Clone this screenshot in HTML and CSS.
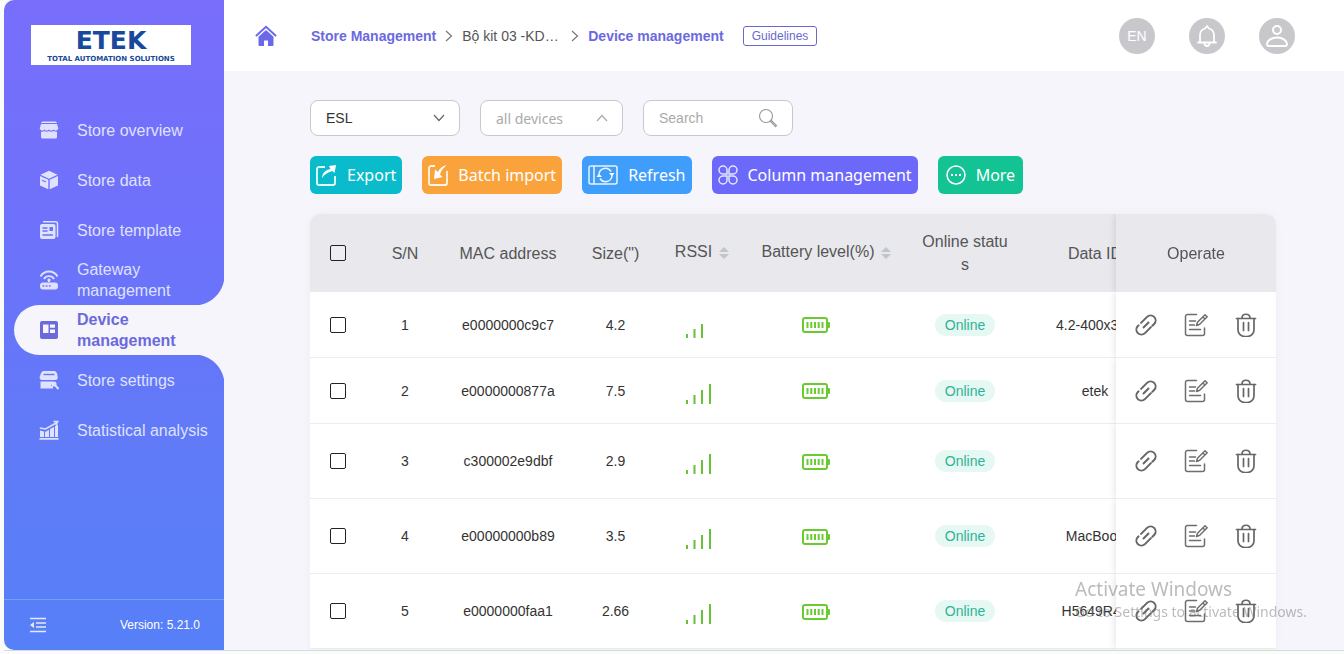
FILE: index.html
```html
<!DOCTYPE html>
<html lang="en">
<head>
    <meta charset="UTF-8">
    <meta name="viewport" content="width=device-width, initial-scale=1.0">
    <title>Device management</title>
    <link rel="stylesheet" href="styles.css">
</head>
<body>
    <!-- Shared icons -->
    <svg class="sprite" aria-hidden="true">
        <symbol id="i-rssi3" viewBox="0 0 34 26">
            <path d="M2 22v4M9.500 17v9M17 12v14" stroke="#67c23a" stroke-width="2" fill="none"/>
        </symbol>
        <symbol id="i-rssi4" viewBox="0 0 34 26">
            <path d="M2 22v4M9.500 17v9M17 12v14M25 6v20" stroke="#67c23a" stroke-width="2" fill="none"/>
        </symbol>
        <symbol id="i-battery" viewBox="0 0 28 16">
            <rect x="1" y="1" width="24" height="14" rx="2" fill="none" stroke="#69cb2f" stroke-width="2"/>
            <path d="M5.500 5v6M9.300 5v6M13 5v6M16.700 5v6M20.500 5v6" stroke="#69cb2f" stroke-width="2"/>
            <rect x="25" y="5" width="3" height="6" rx="1" fill="#69cb2f"/>
        </symbol>
        <symbol id="i-link" viewBox="0 0 24 24">
            <g fill="none" stroke="#666" stroke-width="2" stroke-linecap="round" transform="rotate(-45 12 12)">
                <path d="M10 7h8.500a5 5 0 0 1 0 10h-2.500"/>
                <path d="M14 17H5.500a5 5 0 0 1 0-10h1"/>
                <path d="M8.500 12h7"/>
            </g>
        </symbol>
        <symbol id="i-edit" viewBox="0 0 24 24">
            <g fill="none" stroke="#6e6e6e" stroke-width="1.500" stroke-linecap="round" stroke-linejoin="round">
                <path d="M12.500 1.500h-9a2 2 0 0 0-2 2v17a2 2 0 0 0 2 2h15a2 2 0 0 0 2-2v-5.500"/>
                <path d="M5.500 8h6M5.500 12h5M5.500 16.500h11"/>
                <path d="M12.500 12.500l1-3.300 7.500-7.500 2.200 2-7.500 7.600zM18.800 4l2.200 2"/>
            </g>
        </symbol>
        <symbol id="i-trash" viewBox="0 0 24 24">
            <g fill="none" stroke="#666" stroke-width="1.700" stroke-linecap="round">
                <path d="M2.500 5.500h19M8 5c0-5 8-5 8 0"/>
                <path d="M4 5.500v11.500a7 6.500 0 0 0 7 6.500h2a7 6.500 0 0 0 7-6.500v-11.500"/>
                <path d="M9.500 9.500v8M14.500 9.500v8"/>
            </g>
        </symbol>
        <symbol id="i-sort" viewBox="0 0 10 12">
            <path d="M5 0l5 5H0zM5 12l5-5H0z" fill="#c0c4cc"/>
        </symbol>
    </svg>

    <div class="app">
        <aside class="sidebar">
            <div class="logo">
                <span class="logo-name">ETEK</span>
                <span class="logo-tag">TOTAL AUTOMATION SOLUTIONS</span>
            </div>

            <nav class="menu">
                <a class="menu-item" href="#">
                    <svg class="menu-icon" viewBox="0 0 20 20"><path fill="currentColor" d="M4 1.500h12a2 2 0 0 1 2 1.500H2a2 2 0 0 1 2-1.500zM2 4h16l1.300 4.500a2.600 2.600 0 0 1-4.700 1 2.900 2.900 0 0 1-4.600 0 2.900 2.900 0 0 1-4.600 0 2.600 2.600 0 0 1-4.700-1zM2 11.800a5 5 0 0 0 3.400-.7 5 5 0 0 0 4.600 0 5 5 0 0 0 4.600 0 5 5 0 0 0 3.400.7V17a1.500 1.500 0 0 1-1.500 1.500h-13A1.500 1.500 0 0 1 2 17z"/></svg>
                    <span>Store overview</span>
                </a>
                <a class="menu-item" href="#">
                    <svg class="menu-icon" viewBox="0 0 20 20"><path fill="currentColor" d="M10 .8l8.500 3.900L10 8.800 1.500 4.700zM1 6l8.300 3.800v9.400L1 15.400zM19 6l-8.300 3.800v9.400l8.300-3.800z"/><path d="M3 10.200l4 1.800" stroke="#7070fa" stroke-width="1.200"/></svg>
                    <span>Store data</span>
                </a>
                <a class="menu-item" href="#">
                    <svg class="menu-icon" viewBox="0 0 20 20"><path fill="none" stroke="currentColor" stroke-width="1.500" d="M4 1.800h12.500a2 2 0 0 1 2 2V17"/><rect x="1" y="4" width="15.500" height="15" rx="2" fill="currentColor"/><path d="M3.500 8h5M3.500 11h5M3.500 15h10.500" stroke="#6a74f8" stroke-width="1.500"/><path d="M10.500 7h3.500v4h-3.500z" fill="#6a74f8"/></svg>
                    <span>Store template</span>
                </a>
                <a class="menu-item" href="#">
                    <svg class="menu-icon" viewBox="0 0 20 20"><rect x="1" y="12.500" width="18" height="7" rx="3" fill="currentColor"/><path d="M3.500 16h1.800M6.700 16h1.800M9.900 16h1.800" stroke="#6a74f8" stroke-width="1.500"/><path d="M10 12V9.500M1.500 6.500a9.700 9.700 0 0 1 17 0M5 9a5.800 5.800 0 0 1 10 0" fill="none" stroke="currentColor" stroke-width="1.900"/><circle cx="10" cy="10" r="1.600" fill="currentColor"/></svg>
                    <span>Gateway management</span>
                </a>
                <a class="menu-item active" href="#">
                    <svg class="menu-icon" viewBox="0 0 20 20"><rect x="1" y="1" width="18" height="18" rx="2" fill="currentColor"/><path d="M4 4.500h5.500v8.500H4zM11 4.500h5v3.300h-5zM11 9.500h5v3.500h-5z" fill="#f5f5fb"/></svg>
                    <span>Device management</span>
                </a>
                <a class="menu-item" href="#">
                    <svg class="menu-icon" viewBox="0 0 20 20"><path fill="currentColor" d="M4 1h12l2 2 .8 4.500a2.500 2.500 0 0 1-2.600 2.500H2.800A2.500 2.500 0 0 1 .5 7.500L2 3zM1.500 11.500h12.500l-2 4.500h2v2.500h-12.500z"/><path d="M4.500 4.500h11" stroke="#6677f8" stroke-width="1.400"/><circle cx="15" cy="14" r="2.500" fill="currentColor"/><path d="M15.500 14.500l4 4.500" stroke="currentColor" stroke-width="2"/></svg>
                    <span>Store settings</span>
                </a>
                <a class="menu-item" href="#">
                    <svg class="menu-icon" viewBox="0 0 20 20"><path fill="currentColor" d="M1 10.500l4 1V17H1zM6 12l4-2v7H6zM11 9l4-2v10h-4zM16 6l3-1.500V17h-3zM.5 18h19v1.700H.5z"/><path d="M.8 8l5.700 1L18 2.500M14.500 1.500h4.200L17 5" fill="none" stroke="currentColor" stroke-width="1.500"/></svg>
                    <span>Statistical analysis</span>
                </a>
            </nav>

            <div class="sidebar-footer">
                <button class="collapse" type="button" aria-label="Collapse menu">
                    <svg width="16" height="16" viewBox="0 0 16 16"><path d="M0 1.500h16M6 6h10M6 10h10M0 14.500h16" stroke="#e6eaff" stroke-width="1.500"/><path d="M0 8l4-3v6z" fill="#e6eaff"/></svg>
                </button>
                <span>Version: 5.21.0</span>
            </div>
        </aside>

        <div class="main">
            <header class="topbar">
                <a class="home" href="#" aria-label="Home">
                    <svg width="22" height="22" viewBox="0 0 22 22"><path d="M1.500 10.500L11 1.800l9.500 8.700" fill="none" stroke="#6b69ea" stroke-width="2" stroke-linecap="round"/><path d="M11 5l7.500 6.800V20a1 1 0 0 1-1 1H13v-5.500H9V21H4.500a1 1 0 0 1-1-1v-8.200z" fill="#6b69ea"/></svg>
                </a>
                <nav class="breadcrumb">
                    <a href="#">Store Management</a>
                    <svg class="crumb-arrow" viewBox="0 0 8 12"><path d="M1 1l5.500 5L1 11" fill="none" stroke="#777" stroke-width="1.200"/></svg>
                    <span class="crumb-store">Bộ kit 03 -KD…</span>
                    <svg class="crumb-arrow" viewBox="0 0 8 12"><path d="M1 1l5.500 5L1 11" fill="none" stroke="#777" stroke-width="1.200"/></svg>
                    <a href="#">Device management</a>
                </nav>
                <button class="guidelines" type="button">Guidelines</button>
                <div class="user-tools">
                    <button class="round" type="button">EN</button>
                    <button class="round" type="button" aria-label="Notifications">
                        <svg width="22" height="24" viewBox="0 0 22 24"><path d="M2 18.500h18M4 18v-7a7 7 0 0 1 5-6.500L11 2l2 2.500a7 7 0 0 1 5 6.500v7M8.500 19c0 4 5 4 5 0" fill="none" stroke="#fff" stroke-width="1.800" stroke-linecap="round" stroke-linejoin="round"/></svg>
                    </button>
                    <button class="round" type="button" aria-label="Account">
                        <svg width="24" height="24" viewBox="0 0 24 24"><g fill="none" stroke="#fff" stroke-width="2"><circle cx="12" cy="6" r="4"/><path d="M12 13.500c6 0 10 3.500 10 6.500 0 1.500-1 2-2 2H4c-1 0-2-.5-2-2 0-3 4-6.500 10-6.500z"/></g></svg>
                    </button>
                </div>
            </header>

            <main class="content">
                <div class="filters">
                    <div class="field">
                        <select aria-label="Device type"><option>ESL</option></select>
                        <svg width="12" height="8" viewBox="0 0 12 8"><path d="M1 1l5 5.500L11 1" fill="none" stroke="#666" stroke-width="1.200"/></svg>
                    </div>
                    <div class="field field-status">
                        <select aria-label="Device status"><option>all devices</option></select>
                        <svg width="12" height="8" viewBox="0 0 12 8"><path d="M1 7l5-5.500L11 7" fill="none" stroke="#aaa" stroke-width="1.200"/></svg>
                    </div>
                    <div class="field">
                        <input type="text" placeholder="Search" aria-label="Search">
                        <svg width="20" height="20" viewBox="0 0 20 20"><g fill="none" stroke="#999" stroke-width="1.100"><circle cx="8" cy="8" r="6.500"/><path d="M12.500 13.500l1-1 5 5-1 1.200z"/></g></svg>
                    </div>
                </div>

                <div class="actions">
                    <button class="btn export" type="button">
                        <svg width="21" height="22" viewBox="0 0 21 22"><path d="M9 3H3a2 2 0 0 0-2 2v14a2 2 0 0 0 2 2h14a2 2 0 0 0 2-2v-7" fill="none" stroke="#e8ffff" stroke-width="1.800"/><path d="M6 14c.5-6 4-8 8.500-9L13 2l7-1-1.500 8-2-2C12 8 9 10 6 14z" fill="#fff"/></svg>
                        Export
                    </button>
                    <button class="btn import" type="button">
                        <svg width="20" height="22" viewBox="0 0 20 22"><path d="M7 2H3a2 2 0 0 0-2 2v15a2 2 0 0 0 2 2h14a2 2 0 0 0 2-2V7" fill="none" stroke="#fff6e4" stroke-width="1.800"/><path d="M18.500 1c-4 1-6.500 3-8.500 7L7 5.500 6 15l8.500-2-2.500-2.500c1-4 3-6 6.500-9.500z" fill="#fff"/></svg>
                        Batch import
                    </button>
                    <button class="btn refresh" type="button">
                        <svg width="30" height="22" viewBox="0 0 30 22"><g fill="none" stroke="#e8f3ff" stroke-width="1.500"><rect x="1" y="2" width="28" height="18" rx="2"/><path d="M6 2v18M11 10a6.500 6.500 0 0 1 12-2.500M24 12a6.500 6.500 0 0 1-12 2.500"/></g><path d="M21 9h5.500l-2.500 3.500zM8.500 13h5.500l-3-3.500z" fill="#fff"/></svg>
                        Refresh
                    </button>
                    <button class="btn columns" type="button">
                        <svg width="20" height="20" viewBox="0 0 20 20"><g fill="none" stroke="#e6e6ff" stroke-width="1.500"><path d="M5 1a4 4 0 0 1 4 4v4H5a4 4 0 0 1 0-8zM15 1a4 4 0 0 0-4 4v4h4a4 4 0 0 0 0-8zM5 19a4 4 0 0 0 4-4v-4H5a4 4 0 0 0 0 8zM15 19a4 4 0 0 1-4-4v-4h4a4 4 0 0 1 0 8z"/></g></svg>
                        Column management
                    </button>
                    <button class="btn more" type="button">
                        <svg width="20" height="20" viewBox="0 0 20 20"><circle cx="10" cy="10" r="9" fill="none" stroke="#fff" stroke-width="1.500"/><path d="M5 9h2v2H5zM9 9h2v2H9zM13 9h2v2h-2z" fill="#fff"/></svg>
                        More
                    </button>
                </div>

                <div class="table-wrap">
                    <table class="devices">
                        <colgroup>
                            <col class="c-check"><col class="c-sn"><col class="c-mac"><col class="c-size"><col class="c-rssi"><col class="c-battery"><col class="c-status"><col class="c-data"><col class="c-operate">
                        </colgroup>
                        <thead>
                            <tr>
                                <th><input type="checkbox" aria-label="Select all"></th>
                                <th>S/N</th>
                                <th>MAC address</th>
                                <th>Size(")</th>
                                <th>RSSI<span class="sort"><svg width="10" height="12"><use href="#i-sort"/></svg></span></th>
                                <th>Battery level(%)<span class="sort"><svg width="10" height="12"><use href="#i-sort"/></svg></span></th>
                                <th class="break">Online status</th>
                                <th>Data ID</th>
                                <th class="operate">Operate</th>
                            </tr>
                        </thead>
                        <tbody>
                            <tr>
                                <td><input type="checkbox" aria-label="Select device 1"></td>
                                <td>1</td>
                                <td>e0000000c9c7</td>
                                <td>4.2</td>
                                <td><svg width="34" height="26"><use href="#i-rssi3"/></svg></td>
                                <td class="battery"><svg width="28" height="16"><use href="#i-battery"/></svg></td>
                                <td><span class="tag">Online</span></td>
                                <td>4.2-400x300</td>
                                <td class="operate">
                                    <div class="ops">
                                        <button type="button" aria-label="Bind"><svg width="24" height="24"><use href="#i-link"/></svg></button>
                                        <button type="button" aria-label="Edit"><svg width="24" height="24"><use href="#i-edit"/></svg></button>
                                        <button type="button" aria-label="Delete"><svg width="24" height="24"><use href="#i-trash"/></svg></button>
                                    </div>
                                </td>
                            </tr>
                            <tr>
                                <td><input type="checkbox" aria-label="Select device 2"></td>
                                <td>2</td>
                                <td>e0000000877a</td>
                                <td>7.5</td>
                                <td><svg width="34" height="26"><use href="#i-rssi4"/></svg></td>
                                <td class="battery"><svg width="28" height="16"><use href="#i-battery"/></svg></td>
                                <td><span class="tag">Online</span></td>
                                <td>etek</td>
                                <td class="operate">
                                    <div class="ops">
                                        <button type="button" aria-label="Bind"><svg width="24" height="24"><use href="#i-link"/></svg></button>
                                        <button type="button" aria-label="Edit"><svg width="24" height="24"><use href="#i-edit"/></svg></button>
                                        <button type="button" aria-label="Delete"><svg width="24" height="24"><use href="#i-trash"/></svg></button>
                                    </div>
                                </td>
                            </tr>
                            <tr class="tall">
                                <td><input type="checkbox" aria-label="Select device 3"></td>
                                <td>3</td>
                                <td>c300002e9dbf</td>
                                <td>2.9</td>
                                <td><svg width="34" height="26"><use href="#i-rssi4"/></svg></td>
                                <td class="battery"><svg width="28" height="16"><use href="#i-battery"/></svg></td>
                                <td><span class="tag">Online</span></td>
                                <td></td>
                                <td class="operate">
                                    <div class="ops">
                                        <button type="button" aria-label="Bind"><svg width="24" height="24"><use href="#i-link"/></svg></button>
                                        <button type="button" aria-label="Edit"><svg width="24" height="24"><use href="#i-edit"/></svg></button>
                                        <button type="button" aria-label="Delete"><svg width="24" height="24"><use href="#i-trash"/></svg></button>
                                    </div>
                                </td>
                            </tr>
                            <tr class="tall">
                                <td><input type="checkbox" aria-label="Select device 4"></td>
                                <td>4</td>
                                <td>e00000000b89</td>
                                <td>3.5</td>
                                <td><svg width="34" height="26"><use href="#i-rssi4"/></svg></td>
                                <td class="battery"><svg width="28" height="16"><use href="#i-battery"/></svg></td>
                                <td><span class="tag">Online</span></td>
                                <td>MacBook</td>
                                <td class="operate">
                                    <div class="ops">
                                        <button type="button" aria-label="Bind"><svg width="24" height="24"><use href="#i-link"/></svg></button>
                                        <button type="button" aria-label="Edit"><svg width="24" height="24"><use href="#i-edit"/></svg></button>
                                        <button type="button" aria-label="Delete"><svg width="24" height="24"><use href="#i-trash"/></svg></button>
                                    </div>
                                </td>
                            </tr>
                            <tr class="tall">
                                <td><input type="checkbox" aria-label="Select device 5"></td>
                                <td>5</td>
                                <td>e0000000faa1</td>
                                <td>2.66</td>
                                <td><svg width="34" height="26"><use href="#i-rssi4"/></svg></td>
                                <td class="battery"><svg width="28" height="16"><use href="#i-battery"/></svg></td>
                                <td><span class="tag">Online</span></td>
                                <td>H5649R42</td>
                                <td class="operate">
                                    <div class="ops">
                                        <button type="button" aria-label="Bind"><svg width="24" height="24"><use href="#i-link"/></svg></button>
                                        <button type="button" aria-label="Edit"><svg width="24" height="24"><use href="#i-edit"/></svg></button>
                                        <button type="button" aria-label="Delete"><svg width="24" height="24"><use href="#i-trash"/></svg></button>
                                    </div>
                                </td>
                            </tr>
                        </tbody>
                    </table>
                </div>
            </main>
        </div>
    </div>

    <div class="activation">
        <div class="activation-title">Activate Windows</div>
        <div>Go to Settings to activate Windows.</div>
    </div>
</body>
</html>
```
FILE: styles.css
```css
* {
    box-sizing: border-box;
}
body {
    margin: 0;
    padding: 0 0 3px 4px;
    height: 100vh;
    overflow: hidden;
    background-color: #fafcfa;
    font-family: "Liberation Sans", Arial, sans-serif;
    font-size: 14px;
    color: #333;
}
a {
    text-decoration: none;
}
button {
    font-family: inherit;
    border: none;
    padding: 0;
    cursor: pointer;
}
svg {
    display: block;
    flex: none;
}
.sprite {
    display: none;
}
.app {
    display: flex;
    height: 100%;
    border-bottom: 1px solid #d6dbdb;
}

/* Sidebar */
.sidebar {
    display: flex;
    flex-direction: column;
    flex: none;
    width: 220px;
    background: linear-gradient(#786efb, #6e71fb 35%, #6279f8 62%, #5680f8);
    border-radius: 10px 0 0 10px;
    color: #dfe2ff;
}
.logo {
    display: flex;
    flex-direction: column;
    align-items: center;
    justify-content: center;
    width: 160px;
    height: 40px;
    margin: 25px 27px 40px;
    background-color: #fff;
    color: #17499c;
    font-family: "DejaVu Sans", sans-serif;
    font-weight: bold;
}
.logo-name {
    font-size: 25px;
    line-height: 29px;
}
.logo-tag {
    font-size: 7px;
    line-height: 9px;
    white-space: nowrap;
}
.menu {
    flex: 1;
}
.menu-item {
    position: relative;
    display: flex;
    align-items: center;
    gap: 18px;
    height: 50px;
    margin-left: 10px;
    padding: 0 12px 0 25px;
    color: #dfe2ff;
    font-size: 16px;
    line-height: 21px;
}
.menu-icon {
    width: 20px;
    height: 20px;
}
.menu-item.active {
    background-color: #f5f5fb;
    border-radius: 25px 0 0 25px;
    color: #6b69dc;
    font-weight: bold;
}
/* Curved joins between the active item and the page */
.menu-item.active::before,
.menu-item.active::after {
    content: "";
    position: absolute;
    right: 0;
    width: 30px;
    height: 30px;
}
.menu-item.active::before {
    bottom: 100%;
    background: radial-gradient(circle at 0 0, transparent 30px, #f5f5fb 31px);
}
.menu-item.active::after {
    top: 100%;
    background: radial-gradient(circle at 0 100%, transparent 30px, #f5f5fb 31px);
}
.sidebar-footer {
    display: flex;
    align-items: center;
    justify-content: space-between;
    height: 51px;
    padding: 0 24px 0 26px;
    border-top: 1px solid #7c9bfa;
    color: #fff;
    font-size: 12px;
}
.collapse {
    background: none;
}

/* Top bar */
.main {
    flex: 1;
    min-width: 0;
    overflow: hidden;
    background-color: #f5f5fb;
}
.topbar {
    display: flex;
    align-items: center;
    height: 71px;
    padding: 0 49px 0 31px;
    background-color: #fff;
}
.breadcrumb {
    display: flex;
    align-items: center;
    margin: 0 19px 0 34px;
    white-space: nowrap;
}
.breadcrumb a {
    color: #6b69e0;
    font-weight: bold;
}
.crumb-arrow {
    width: 8px;
    height: 12px;
    margin: 0 9px;
}
.crumb-store {
    width: 100px;
    color: #555;
}
.guidelines {
    height: 20px;
    padding: 0 8px;
    border: 1px solid #6b69d0;
    border-radius: 3px;
    background-color: #fff;
    color: #6b69d0;
    font-size: 12px;
}
.user-tools {
    display: flex;
    gap: 34px;
    margin-left: auto;
}
.round {
    display: flex;
    align-items: center;
    justify-content: center;
    width: 36px;
    height: 36px;
    border-radius: 50%;
    background-color: #c8c8cc;
    color: #fff;
    font-size: 14px;
}

/* Filters and actions */
.content {
    padding: 29px 68px 0 86px;
}
.filters {
    display: flex;
    gap: 20px;
    margin-bottom: 20px;
}
.field {
    display: grid;
    align-items: center;
    width: 150px;
    height: 36px;
    border: 1px solid #c8c8d0;
    border-radius: 8px;
    background-color: #fff;
}
.field-status {
    width: 143px;
}
.field > * {
    grid-area: 1 / 1;
}
.field svg {
    justify-self: end;
    margin-right: 14px;
    pointer-events: none;
}
.field select,
.field input {
    appearance: none;
    width: 100%;
    height: 34px;
    padding: 0 15px;
    border: none;
    outline: none;
    background: none;
    color: #333;
    font-family: inherit;
    font-size: 14px;
}
.field-status select {
    color: #aaa;
    font-family: "Noto Sans", sans-serif;
}
.field input::placeholder {
    color: #aaa;
}
.actions {
    display: flex;
    gap: 20px;
    margin-bottom: 20px;
}
.btn {
    display: flex;
    align-items: center;
    gap: 10px;
    height: 38px;
    padding: 0 6px;
    border-radius: 6px;
    color: #fff;
    font-family: "Noto Sans", sans-serif;
    font-size: 16px;
    white-space: nowrap;
}
.export {
    background-color: #0abccb;
}
.import {
    background-color: #faa33c;
}
.refresh {
    background-color: #3f9dfc;
}
.columns {
    background-color: #6c69fa;
}
.more {
    padding: 0 8px;
    background-color: #14c394;
}

/* Device table */
.table-wrap {
    overflow-x: auto;
    scrollbar-width: none;
    border-radius: 10px 10px 0 0;
    background-color: #fff;
    box-shadow: 0 0 8px rgba(0,0,0,0.04);
}
.devices {
    width: 100%;
    min-width: 1018px;
    table-layout: fixed;
    border-collapse: separate;
    border-spacing: 0;
    text-align: center;
}
.c-check { width: 56px; }
.c-sn { width: 78px; }
.c-mac { width: 128px; }
.c-size { width: 87px; }
.c-rssi { width: 86px; }
.c-battery { width: 163px; }
.c-status { width: 114px; }
.c-data { width: 146px; }
.c-operate { width: 160px; }
.devices th {
    height: 78px;
    padding: 0;
    background-color: #e8e8ed;
    color: #555;
    font-size: 16px;
    font-weight: normal;
    line-height: 23px;
    white-space: nowrap;
}
.devices th.break {
    padding: 0 12px;
    white-space: normal;
    word-break: break-all;
}
.devices td {
    height: 66px;
    padding: 0;
    border-bottom: 1px solid #ebebf0;
    background-color: #fff;
}
.devices .tall td {
    height: 75px;
}
.devices td > svg {
    display: inline-block;
    vertical-align: middle;
}
.devices .battery {
    padding-right: 22px;
}
.sort {
    display: inline-flex;
    align-items: center;
    justify-content: flex-end;
    width: 17px;
    height: 34px;
    vertical-align: middle;
}
.devices input {
    appearance: none;
    display: block;
    width: 16px;
    height: 16px;
    margin: 0 auto;
    border: 1px solid #222;
    border-radius: 2px;
    background-color: #fff;
}
.devices thead input {
    background-color: #eeeef2;
}
.tag {
    display: inline-block;
    padding: 0 10px;
    border-radius: 11px;
    background-color: #e6f8f3;
    color: #2fb394;
    line-height: 22px;
}
/* Fixed column: the clip keeps its shadow on the left side only */
.devices .operate {
    position: sticky;
    right: 0;
    box-shadow: 0 0 8px rgba(0,0,0,0.14);
    clip-path: inset(0 0 0 -10px);
}
.ops {
    display: flex;
    justify-content: center;
    gap: 26px;
}
.ops button {
    background: none;
}

/* Activation notice over the page */
.activation {
    position: fixed;
    right: 37px;
    bottom: 31px;
    color: rgba(120,120,120,0.5);
    font-family: "Noto Sans", sans-serif;
    font-size: 14px;
    line-height: 22px;
    pointer-events: none;
}
.activation-title {
    font-size: 19px;
    line-height: 24px;
}
```
